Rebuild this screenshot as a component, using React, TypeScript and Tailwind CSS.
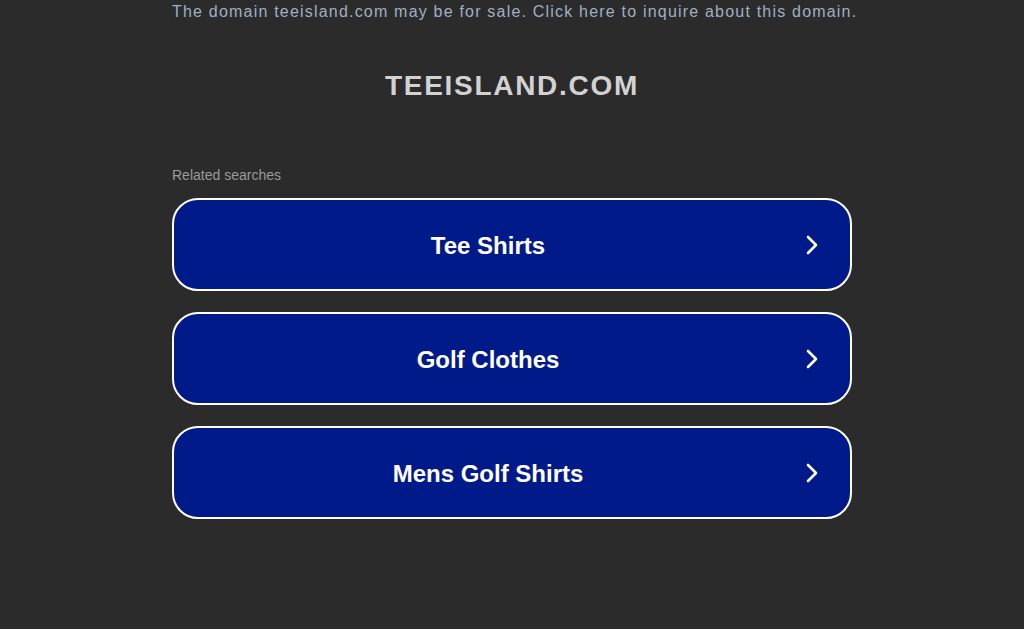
import React from 'react';

const searches = ['Tee Shirts', 'Golf Clothes', 'Mens Golf Shirts'];

const Chevron: React.FC = () => (
  <svg width="16" height="22" viewBox="0 0 16 22" fill="none" className="shrink-0">
    <path d="M4 3 L12 11 L4 19" stroke="#ffffff" strokeWidth="2.6" strokeLinecap="round" strokeLinejoin="round" />
  </svg>
);

const App: React.FC = () => {
  return (
    <div className="min-h-[629px] w-full bg-[#2b2b2b] font-['Liberation_Sans',Arial,sans-serif]">
      <div className="mx-auto w-[680px]">
        <p className="pt-[2px] text-[16px] leading-[20px] tracking-[1.2px] text-[#9eb0c2] whitespace-nowrap">
          The domain teeisland.com may be for sale. Click here to inquire about this domain.
        </p>
        <h1 className="mt-[48px] text-center text-[28px] font-bold leading-[32px] tracking-[1.7px] text-[#d2d2d2]">
          TEEISLAND.COM
        </h1>
        <p className="mt-[65px] text-[14px] leading-[16px] text-[#9a9a9a]">Related searches</p>
        <div className="mt-[15px] flex flex-col gap-[21px]">
          {searches.map(s => (
            <a
              key={s}
              href="#"
              className="flex h-[93px] items-center rounded-[26px] border-2 border-white bg-[#011a8a] pr-[30px]"
            >
              <span className="flex-1 pt-[2px] pr-[2px] text-center text-[24px] font-bold text-white">{s}</span>
              <Chevron />
            </a>
          ))}
        </div>
      </div>
    </div>
  );
};

export default App;
